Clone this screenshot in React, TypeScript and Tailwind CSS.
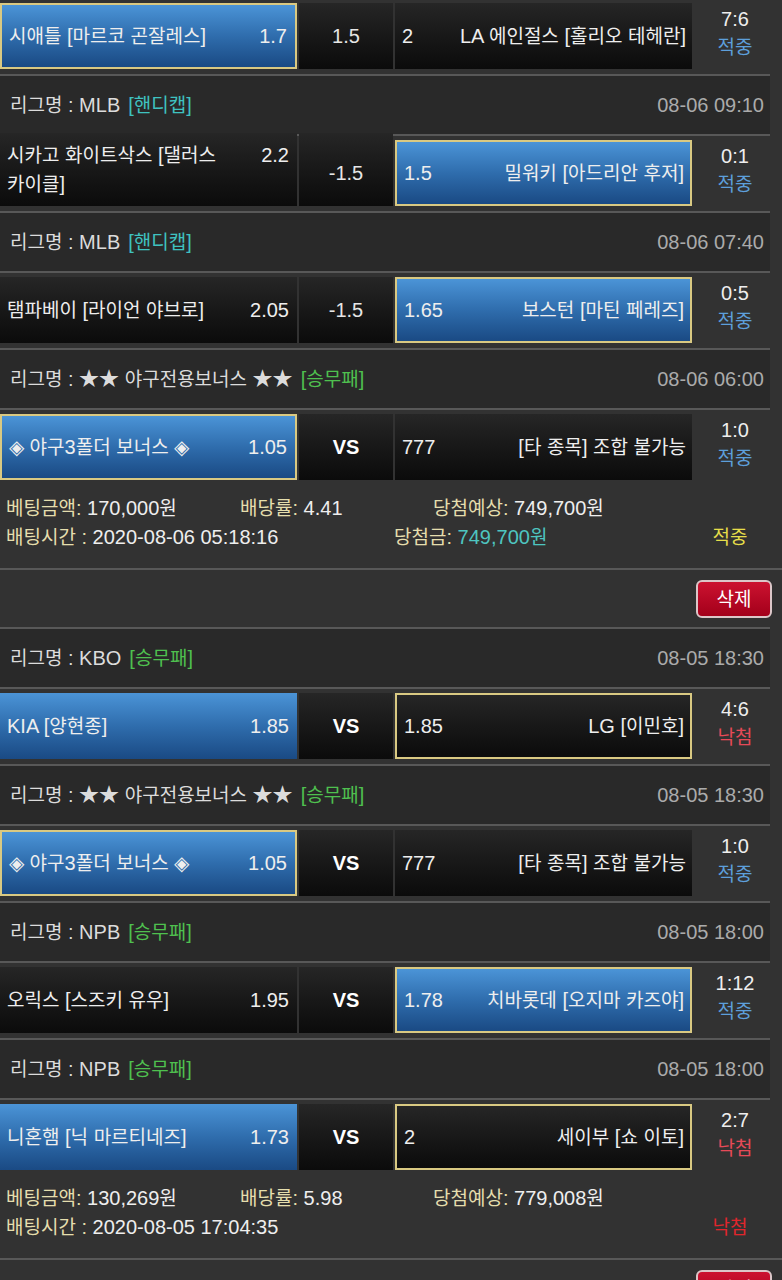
import React from "react";

type Side = { name: string; odds: string; picked?: boolean; won?: boolean };

type Game = {
  league?: { name: string; tag: string; tagColor: "teal" | "green"; time: string };
  home: Side;
  mid: string;
  away: Side;
  score: string;
  result: "hit" | "miss";
  tall?: boolean;
};

// Hangul in the original font runs narrower than the Latin digits, so shrink those runs a bit
function K({ t }: { t: string }) {
  const parts = t.split(/([\uAC00-\uD7A3]+)/);
  return (
    <>
      {parts.map((p, i) =>
        /[\uAC00-\uD7A3]/.test(p) ? (
          <span key={i} className="text-[0.95em]">
            {p}
          </span>
        ) : (
          <React.Fragment key={i}>{p}</React.Fragment>
        )
      )}
    </>
  );
}

function Multi({ t }: { t: string }) {
  const lines = t.split("\n");
  return (
    <>
      {lines.map((l, i) => (
        <React.Fragment key={i}>
          {i > 0 && <br />}
          <K t={l} />
        </React.Fragment>
      ))}
    </>
  );
}

function cellBg(side: Side) {
  const bg = side.picked
    ? "bg-linear-to-b from-[#4b94d7] via-[#2f6dad] to-[#1a4a84]"
    : "bg-linear-to-b from-[#262626] to-[#0b0b0b]";
  const border = side.won ? "border-2 border-[#d9c982]" : "";
  return `${bg} ${border}`;
}

function HomeCell({ side, tall }: { side: Side; tall?: boolean }) {
  const h = tall && !side.picked ? "h-[73px]" : "h-[66px]";
  return (
    <div className={`flex w-[297px] shrink-0 items-center ${h} ${cellBg(side)}`}>
      <div className="flex w-full items-start justify-between pl-[7px] pr-[8px] text-[#eeeeee]">
        <span className="leading-[29px]">
          <Multi t={side.name} />
        </span>
        <span className="leading-[29px]">{side.odds}</span>
      </div>
    </div>
  );
}

function AwayCell({ side, tall }: { side: Side; tall?: boolean }) {
  const h = tall && !side.picked ? "h-[73px]" : "h-[66px]";
  return (
    <div className={`ml-[2px] flex w-[297px] shrink-0 items-center ${h} ${cellBg(side)}`}>
      <div className="flex w-full items-center justify-between pl-[7px] pr-[6px] text-[#eeeeee]">
        <span>{side.odds}</span>
        <span>
          <K t={side.name} />
        </span>
      </div>
    </div>
  );
}

function LeagueRow({ league }: { league: NonNullable<Game["league"]> }) {
  const tagCls = league.tagColor === "teal" ? "text-[#3fc2c0]" : "text-[#4fc04f]";
  return (
    <div className="flex h-[62px] w-[770px] items-center justify-between border-y-2 border-[#585858] bg-[#292929] pl-[10px] pr-[6px]">
      <div className="text-[#dcdcdc]">
        <K t={`리그명 : ${league.name}`} />
        <span className={`ml-[8px] ${tagCls}`}>
          <K t={`[${league.tag}]`} />
        </span>
      </div>
      <div className="text-[#ababab]">{league.time}</div>
    </div>
  );
}

function MatchRow({ game }: { game: Game }) {
  const midVs = game.mid === "VS";
  return (
    <div className="flex h-[75px] items-end pb-[5px]">
      <HomeCell side={game.home} tall={game.tall} />
      <div
        className={`ml-[2px] flex w-[94px] shrink-0 items-center justify-center bg-linear-to-b from-[#262626] to-[#0b0b0b] ${
          game.tall ? "h-[73px] pt-[6px]" : "h-[66px]"
        }`}
      >
        <span className={midVs ? "font-bold text-white" : "text-[#e6e6e6]"}>{game.mid}</span>
      </div>
      <AwayCell side={game.away} tall={game.tall} />
      <div className="flex h-[66px] w-[78px] flex-col items-center justify-center pb-[6px] pl-[8px] leading-[28px]">
        <span className="text-[#eeeeee]">{game.score}</span>
        <span className={game.result === "hit" ? "text-[#5d9fdb]" : "text-[#e64a58]"}>
          <K t={game.result === "hit" ? "적중" : "낙첨"} />
        </span>
      </div>
    </div>
  );
}

function Label({ t }: { t: string }) {
  return (
    <span className="text-[#e5dead]">
      <K t={t} />
    </span>
  );
}

function BetInfo({
  amount,
  rate,
  expect,
  time,
  won,
}: {
  amount: string;
  rate: string;
  expect: string;
  time: string;
  won?: string;
}) {
  return (
    <div className="border-b-2 border-[#585858] pt-[9px] pb-[16px] leading-[29px] text-[#eeeeee]">
      <div className="flex">
        <div className="w-[240px] pl-[6px]">
          <Label t="베팅금액:" /> <K t={amount} />
        </div>
        <div className="w-[193px]">
          <Label t="배당률:" /> {rate}
        </div>
        <div>
          <Label t="당첨예상:" /> <K t={expect} />
        </div>
      </div>
      <div className="flex">
        <div className="w-[394px] pl-[6px]">
          <Label t="배팅시간 :" /> {time}
        </div>
        <div className="flex-1">
          {won && (
            <>
              <Label t="당첨금:" />{" "}
              <span className="text-[#4ec5c0]">
                <K t={won} />
              </span>
            </>
          )}
        </div>
        <div className={`mr-[16px] w-[72px] text-center ${won ? "text-[#e6de4a]" : "text-[#e0262c]"}`}>
          <K t={won ? "적중" : "낙첨"} />
        </div>
      </div>
    </div>
  );
}

function DeleteRow() {
  return (
    <div className="flex justify-end pt-[10px] pb-[9px] pr-[10px]">
      <button className="h-[38px] w-[76px] rounded-md border-2 border-[#dcc6c8] bg-linear-to-b from-[#cc1230] to-[#a3001a] text-white">
        <K t="삭제" />
      </button>
    </div>
  );
}

const slip1: Game[] = [
  {
    home: { name: "시애틀 [마르코 곤잘레스]", odds: "1.7", picked: true, won: true },
    mid: "1.5",
    away: { name: "LA 에인절스 [홀리오 테헤란]", odds: "2" },
    score: "7:6",
    result: "hit",
  },
  {
    league: { name: "MLB", tag: "핸디캡", tagColor: "teal", time: "08-06 09:10" },
    home: { name: "시카고 화이트삭스 [댈러스\n카이클]", odds: "2.2" },
    mid: "-1.5",
    away: { name: "밀워키 [아드리안 후저]", odds: "1.5", picked: true, won: true },
    score: "0:1",
    result: "hit",
    tall: true,
  },
  {
    league: { name: "MLB", tag: "핸디캡", tagColor: "teal", time: "08-06 07:40" },
    home: { name: "탬파베이 [라이언 야브로]", odds: "2.05" },
    mid: "-1.5",
    away: { name: "보스턴 [마틴 페레즈]", odds: "1.65", picked: true, won: true },
    score: "0:5",
    result: "hit",
  },
  {
    league: { name: "★★ 야구전용보너스 ★★", tag: "승무패", tagColor: "green", time: "08-06 06:00" },
    home: { name: "◈ 야구3폴더 보너스 ◈", odds: "1.05", picked: true, won: true },
    mid: "VS",
    away: { name: "[타 종목] 조합 불가능", odds: "777" },
    score: "1:0",
    result: "hit",
  },
];

const slip2: Game[] = [
  {
    league: { name: "KBO", tag: "승무패", tagColor: "green", time: "08-05 18:30" },
    home: { name: "KIA [양현종]", odds: "1.85", picked: true },
    mid: "VS",
    away: { name: "LG [이민호]", odds: "1.85", won: true },
    score: "4:6",
    result: "miss",
  },
  {
    league: { name: "★★ 야구전용보너스 ★★", tag: "승무패", tagColor: "green", time: "08-05 18:30" },
    home: { name: "◈ 야구3폴더 보너스 ◈", odds: "1.05", picked: true, won: true },
    mid: "VS",
    away: { name: "[타 종목] 조합 불가능", odds: "777" },
    score: "1:0",
    result: "hit",
  },
  {
    league: { name: "NPB", tag: "승무패", tagColor: "green", time: "08-05 18:00" },
    home: { name: "오릭스 [스즈키 유우]", odds: "1.95" },
    mid: "VS",
    away: { name: "치바롯데 [오지마 카즈야]", odds: "1.78", picked: true, won: true },
    score: "1:12",
    result: "hit",
  },
  {
    league: { name: "NPB", tag: "승무패", tagColor: "green", time: "08-05 18:00" },
    home: { name: "니혼햄 [닉 마르티네즈]", odds: "1.73", picked: true },
    mid: "VS",
    away: { name: "세이부 [쇼 이토]", odds: "2", won: true },
    score: "2:7",
    result: "miss",
  },
];

function Slip({ games }: { games: Game[] }) {
  return (
    <>
      {games.map((g, i) => (
        <React.Fragment key={i}>
          {g.league && <LeagueRow league={g.league} />}
          <MatchRow game={g} />
        </React.Fragment>
      ))}
    </>
  );
}

export default function App() {
  return (
    <div className="min-h-screen w-[782px] overflow-hidden bg-[#323232] font-['Liberation_Sans','Noto_Sans_CJK_KR',sans-serif] text-[20px]">
      <div className="-mt-[1px]">
        <Slip games={slip1} />
        <BetInfo
          amount="170,000원"
          rate="4.41"
          expect="749,700원"
          time="2020-08-06 05:18:16"
          won="749,700원"
        />
        <DeleteRow />
        <Slip games={slip2} />
        <BetInfo amount="130,269원" rate="5.98" expect="779,008원" time="2020-08-05 17:04:35" />
        <DeleteRow />
      </div>
    </div>
  );
}
